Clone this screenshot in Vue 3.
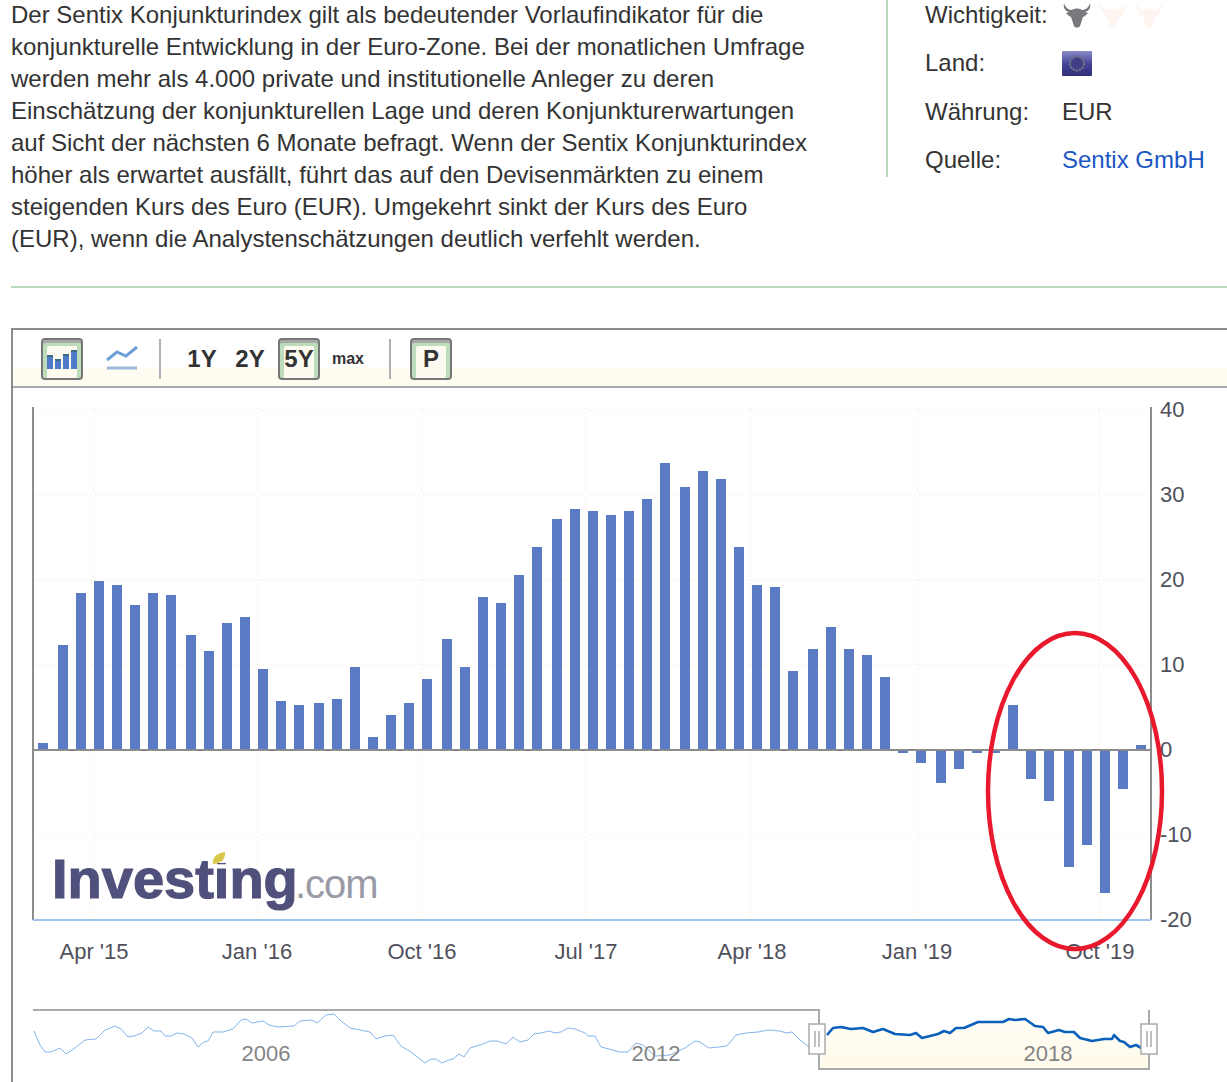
<template>
  <div class="page">
    <!-- Beschreibung und Kennzahlen -->
    <div class="intro">
      <p class="desc">
        Der Sentix Konjunkturindex gilt als bedeutender Vorlaufindikator für die konjunkturelle Entwicklung in der Euro-Zone. Bei der monatlichen Umfrage werden mehr als 4.000 private und institutionelle Anleger zu deren Einschätzung der konjunkturellen Lage und deren Konjunkturerwartungen auf Sicht der nächsten 6 Monate befragt. Wenn der Sentix Konjunkturindex höher als erwartet ausfällt, führt das auf den Devisenmärkten zu einem steigenden Kurs des Euro (EUR). Umgekehrt sinkt der Kurs des Euro (EUR), wenn die Analystenschätzungen deutlich verfehlt werden.
      </p>
      <div class="facts">
        <div class="fact">
          <span class="label">Wichtigkeit:</span>
          <span class="bulls">
            <svg v-for="n in 3" :key="n" class="bull" :class="{ off: n > 1 }" viewBox="0 0 28 26">
              <path d="M1 1C0 6 2 9 6 10L3 11 6 14 8 15 11 24C12 26 16 26 17 24L20 15 22 14 25 11 22 10C26 9 28 6 27 1 26 5 23 8 19 8 16 6 12 6 9 8 5 8 2 5 1 1Z" />
            </svg>
          </span>
        </div>
        <div class="fact">
          <span class="label">Land:</span>
          <svg class="flag" viewBox="0 0 30 25">
            <defs>
              <linearGradient id="flagFill" x1="0" y1="0" x2="0" y2="1">
                <stop offset="0" stop-color="#8a8ac8" />
                <stop offset="0.5" stop-color="#46469a" />
                <stop offset="1" stop-color="#2e2e78" />
              </linearGradient>
            </defs>
            <rect width="30" height="25" rx="1" fill="url(#flagFill)" />
            <circle cx="15" cy="12.5" r="7" fill="#3f3f88" stroke="#70708a" stroke-width="2.2" stroke-dasharray="2.5 0.8" />
          </svg>
        </div>
        <div class="fact">
          <span class="label">Währung:</span>
          <span>EUR</span>
        </div>
        <div class="fact">
          <span class="label">Quelle:</span>
          <a class="source">Sentix GmbH</a>
        </div>
      </div>
    </div>

    <div class="rule"></div>

    <div class="chart-box">
      <div class="toolbar">
        <button class="tool on">
          <svg viewBox="0 0 30 20" class="tool-icon">
            <rect v-for="b in toolBars" :key="b.x" :x="b.x" :y="b.y" width="6" :height="20 - b.y" fill="#4f7ac8" />
            <rect v-for="b in toolBars" :key="'t' + b.x" :x="b.x" :y="b.y" width="6" height="2" fill="#3d6a80" />
          </svg>
        </button>
        <button class="tool plain line-tool">
          <svg viewBox="0 0 34 26" class="line-icon">
            <path d="M2 14 12 6 21 10 32 1" fill="none" stroke="#6ea0d8" stroke-width="3" />
            <path d="M2 22H32" stroke="#a0b8dc" stroke-width="3" />
          </svg>
        </button>
        <span class="sep first"></span>
        <button class="tool plain range">1Y</button>
        <button class="tool plain range">2Y</button>
        <button class="tool on range">5Y</button>
        <button class="tool plain range small">max</button>
        <span class="sep second"></span>
        <button class="tool on range">P</button>
      </div>

      <!-- Seitenkoordinaten: viewBox beginnt dort, wo die Zeichenflaeche liegt -->
      <svg class="chart" viewBox="13 388 1214 694">
        <defs>
          <linearGradient id="navFill" x1="0" y1="0" x2="0" y2="1">
            <stop offset="0" stop-color="#fffdf5" />
            <stop offset="1" stop-color="#fffaea" />
          </linearGradient>
        </defs>

        <!-- Raster -->
        <line v-for="y in gridY" :key="'h' + y" x1="35" x2="1150" :y1="y" :y2="y" class="grid" />
        <line v-for="x in gridX" :key="'v' + x" :x1="x" :x2="x" y1="408" y2="920" class="grid" />

        <!-- Balken -->
        <rect v-for="b in bars" :key="b.x" :x="b.x" :y="b.y" width="10" :height="b.h" fill="#5b7cc4" />

        <!-- Achsen -->
        <path d="M33 407V920" class="axis" />
        <path d="M1151 407V920" class="axis" />
        <path d="M33 750H1151" class="axis" />
        <path d="M33 920H1151" class="axis-blue" />

        <text v-for="t in yLabels" :key="t.label" x="1160" :y="t.y" class="tick">{{ t.label }}</text>
        <text v-for="t in xLabels" :key="t.label" :x="t.x" y="959" class="tick date">{{ t.label }}</text>

        <!-- Logo -->
        <text x="52" y="898" class="logo-main">Investing</text>
        <text x="295" y="898" class="logo-com">.com</text>
        <rect x="208" y="850" width="20" height="13" fill="#fff" />
        <path d="M213 864C212 857 217 853 225 852 226 859 221 864 213 864Z" fill="#d8c84c" />

        <!-- Markierung -->
        <ellipse cx="1075" cy="791" rx="87" ry="158" fill="none" stroke="#e8192c" stroke-width="4.5" />

        <!-- Navigator -->
        <path d="M33 1010H819V1069H1149V1010" class="nav-frame" />
        <polygon :points="navArea" fill="url(#navFill)" />
        <path d="M819 1011V1069H1149V1010" class="nav-frame" />
        <polyline :points="navLine" fill="none" stroke="#86b4ec" stroke-width="1" />
        <polyline :points="navSelected" fill="none" stroke="#0a60ba" stroke-width="2.6" stroke-linejoin="round" />
        <text x="266" y="1061" class="year">2006</text>
        <text x="656" y="1061" class="year">2012</text>
        <text x="1048" y="1061" class="year">2018</text>
        <g v-for="x in handles" :key="x">
          <rect :x="x - 8" y="1024" width="16" height="30" fill="#fff" stroke="#aaa" stroke-width="1.5" />
          <path :d="`M${x - 2} 1031V1047M${x + 2} 1031V1047`" stroke="#aaa" stroke-width="1.5" />
        </g>
      </svg>
    </div>
  </div>
</template>

<script setup>
const tops = [
  [38, 743], [58, 645], [76, 593], [94, 581], [112, 585], [130, 605], [148, 593], [166, 595],
  [186, 635], [204, 651], [222, 623], [240, 617], [258, 669], [276, 701], [294, 705], [314, 703],
  [332, 699], [350, 667], [368, 737], [386, 715], [404, 703], [422, 679], [442, 639], [460, 667],
  [478, 597], [496, 603], [514, 575], [532, 547], [552, 519], [570, 509], [588, 511], [606, 515],
  [624, 511], [642, 499], [660, 463], [680, 487], [698, 471], [716, 479], [734, 547], [752, 585],
  [770, 587], [788, 671], [808, 649], [826, 627], [844, 649], [862, 655], [880, 677],
  [898, 753], [916, 763], [936, 783], [954, 769], [972, 753], [990, 753], [1008, 705], [1026, 779],
  [1044, 801], [1064, 867], [1082, 845], [1100, 893], [1118, 789], [1136, 745],
];

const bars = tops.map(([x, v]) =>
  v > 751 ? { x, y: 750, h: v - 750 } : { x, y: v, h: 751 - v }
);

const toolBars = [
  { x: 0, y: 6 },
  { x: 8, y: 10 },
  { x: 16, y: 5 },
  { x: 24, y: 1 },
];

const gridY = [410, 495, 580, 665, 835];
const gridX = [93, 257, 421, 585, 751, 917, 1099];

const yLabels = [
  { label: "40", y: 417 },
  { label: "30", y: 502 },
  { label: "20", y: 587 },
  { label: "10", y: 672 },
  { label: "0", y: 757 },
  { label: "-10", y: 842 },
  { label: "-20", y: 927 },
];

const xLabels = [
  { label: "Apr '15", x: 94 },
  { label: "Jan '16", x: 257 },
  { label: "Oct '16", x: 422 },
  { label: "Jul '17", x: 586 },
  { label: "Apr '18", x: 752 },
  { label: "Jan '19", x: 917 },
  { label: "Oct '19", x: 1100 },
];

const handles = [817, 1149];

// Navigator-Linie, abgelesen aus dem Bild
const before = [
  [34, 1031], [40, 1045], [45, 1052], [51, 1052], [60, 1048], [66, 1054], [75, 1048], [85, 1040],
  [96, 1039], [105, 1030], [115, 1026], [121, 1029], [128, 1037], [134, 1036], [142, 1033], [148, 1027],
  [154, 1031], [161, 1031], [165, 1036], [171, 1036], [177, 1033], [184, 1034], [192, 1038], [198, 1047],
  [204, 1042], [208, 1041], [213, 1032], [223, 1032], [233, 1029], [241, 1020], [246, 1019], [252, 1023],
  [263, 1021], [269, 1025], [278, 1027], [294, 1026], [300, 1021], [312, 1020], [317, 1023], [326, 1015],
  [334, 1014], [340, 1020], [350, 1028], [370, 1032], [376, 1039], [385, 1036], [393, 1035], [401, 1046],
  [411, 1052], [425, 1063], [431, 1059], [436, 1059], [442, 1063], [449, 1060], [453, 1059], [459, 1054],
  [464, 1057], [470, 1048], [480, 1045], [490, 1041], [497, 1041], [506, 1044], [513, 1037], [520, 1042],
  [528, 1040], [534, 1034], [541, 1033], [549, 1031], [555, 1033], [561, 1032], [568, 1028], [575, 1029],
  [585, 1033], [588, 1036], [595, 1036], [601, 1047], [609, 1049], [620, 1052], [628, 1052], [636, 1043],
  [643, 1045], [655, 1056], [670, 1055], [685, 1048], [695, 1041], [700, 1042], [709, 1048], [719, 1047],
  [727, 1046], [736, 1035], [746, 1033], [758, 1032], [768, 1030], [780, 1031], [786, 1033], [792, 1032],
  [800, 1040], [809, 1047],
];

const selected = [
  [827, 1035], [833, 1028], [841, 1027], [851, 1029], [863, 1028], [873, 1032], [883, 1029], [895, 1034],
  [910, 1035], [916, 1033], [922, 1038], [938, 1034], [944, 1031], [950, 1033], [956, 1028], [964, 1028],
  [978, 1022], [1003, 1022], [1009, 1019], [1015, 1020], [1025, 1019], [1035, 1026], [1043, 1027], [1048, 1033],
  [1059, 1030], [1065, 1032], [1074, 1032], [1080, 1038], [1092, 1041], [1104, 1039], [1112, 1039], [1114, 1035],
  [1120, 1041], [1124, 1042], [1130, 1047], [1136, 1045], [1143, 1049],
];

const toPoints = (pts) => pts.map((p) => p.join(",")).join(" ");
const navLine = toPoints(before);
const navSelected = toPoints(selected);
const navArea = toPoints([[820, 1068], ...selected, [1148, 1049], [1148, 1068]]);
</script>

<style scoped>
.page {
  width: 1227px;
  height: 1082px;
  overflow: hidden;
  background: #fff;
  font-family: "Liberation Sans", Arial, sans-serif;
  font-size: 24px;
  color: #333;
}

.intro {
  display: flex;
  height: 286px;
  padding-left: 11px;
  box-sizing: border-box;
}

.desc {
  width: 800px;
  margin: -1px 0 0;
  line-height: 32px;
}

.facts {
  width: 341px;
  height: 177px;
  margin-left: 75px;
  padding-left: 37px;
  box-sizing: border-box;
  border-left: 2px solid #b9d6b9;
}

.fact {
  display: flex;
  align-items: center;
  height: 48.5px;
  white-space: nowrap;
}

.fact:first-child {
  height: 30px;
  margin-bottom: 9px;
}

.label {
  width: 137px;
  flex-shrink: 0;
}

.bulls {
  display: flex;
  gap: 8px;
  margin-left: 1px;
}

.bull {
  width: 28px;
  height: 26px;
  fill: #77797c;
}

.bull.off {
  fill: #fef4f0;
}

.flag {
  width: 30px;
  height: 25px;
}

.source {
  color: #1a56c4;
}

.rule {
  height: 2px;
  margin-left: 11px;
  background: #bcd8bc;
}

.chart-box {
  margin: 40px 0 0 11px;
  border-left: 2px solid #8c8c8c;
  border-top: 2px solid #8c8c8c;
}

.toolbar {
  display: flex;
  align-items: center;
  height: 58px;
  padding-left: 28px;
  box-sizing: border-box;
  border-bottom: 2px solid #a8a8b4;
  background: linear-gradient(#fff 0, #fff 66%, #fefbf0 66%, #fffcf0 100%);
}

.tool {
  width: 42px;
  height: 42px;
  padding: 0;
  margin-top: 2px;
  font: bold 24px "Liberation Sans", Arial, sans-serif;
  color: #333;
  background: #fff;
  box-sizing: border-box;
  border: 2px solid transparent;
  border-radius: 4px;
  display: flex;
  align-items: center;
  justify-content: center;
}

.tool.on {
  border-color: #777;
  background: #fdfbf0;
  box-shadow: inset 0 3px 0 #a8a8a8, inset 4px 6px 0 #bcdcbc, inset -4px 0 0 #bcdcbc;
}

.tool.plain {
  background: transparent;
}

.tool-icon {
  width: 30px;
  height: 20px;
}

.line-tool {
  margin-left: 18px;
}

.line-icon {
  width: 34px;
  height: 26px;
}

.sep {
  width: 2px;
  height: 40px;
  background: #b0b0b8;
  margin-top: 2px;
}

.sep.first {
  margin-left: 16px;
  margin-right: 20px;
}

.sep.second {
  margin-left: 20px;
  margin-right: 12px;
}

.range {
  width: 42px;
}

.range + .range {
  margin-left: 6px;
}

.tool.on.range {
  margin-left: 7px;
}

.range.small {
  font-size: 16px;
  margin-left: 7px;
}

.chart {
  display: block;
  width: 1214px;
  height: 694px;
}

.grid {
  stroke: #fbe4d0;
  stroke-width: 1;
  stroke-dasharray: 1 3;
}

.axis {
  stroke: #8c8c8c;
  stroke-width: 2;
  fill: none;
}

.axis-blue {
  stroke: #9cc4ec;
  stroke-width: 2;
  fill: none;
}

.tick {
  font-size: 22px;
  fill: #50505c;
}

.date {
  text-anchor: middle;
}

.year {
  font-size: 22px;
  fill: #858585;
  text-anchor: middle;
}

.logo-main {
  font-size: 56px;
  font-weight: bold;
  letter-spacing: 0;
  fill: #50507c;
  stroke: #50507c;
  stroke-width: 1.2;
}

.logo-com {
  font-size: 40px;
  letter-spacing: -1px;
  fill: #9a9aa6;
}

.nav-frame {
  fill: none;
  stroke: #aaa;
  stroke-width: 2;
}
</style>
